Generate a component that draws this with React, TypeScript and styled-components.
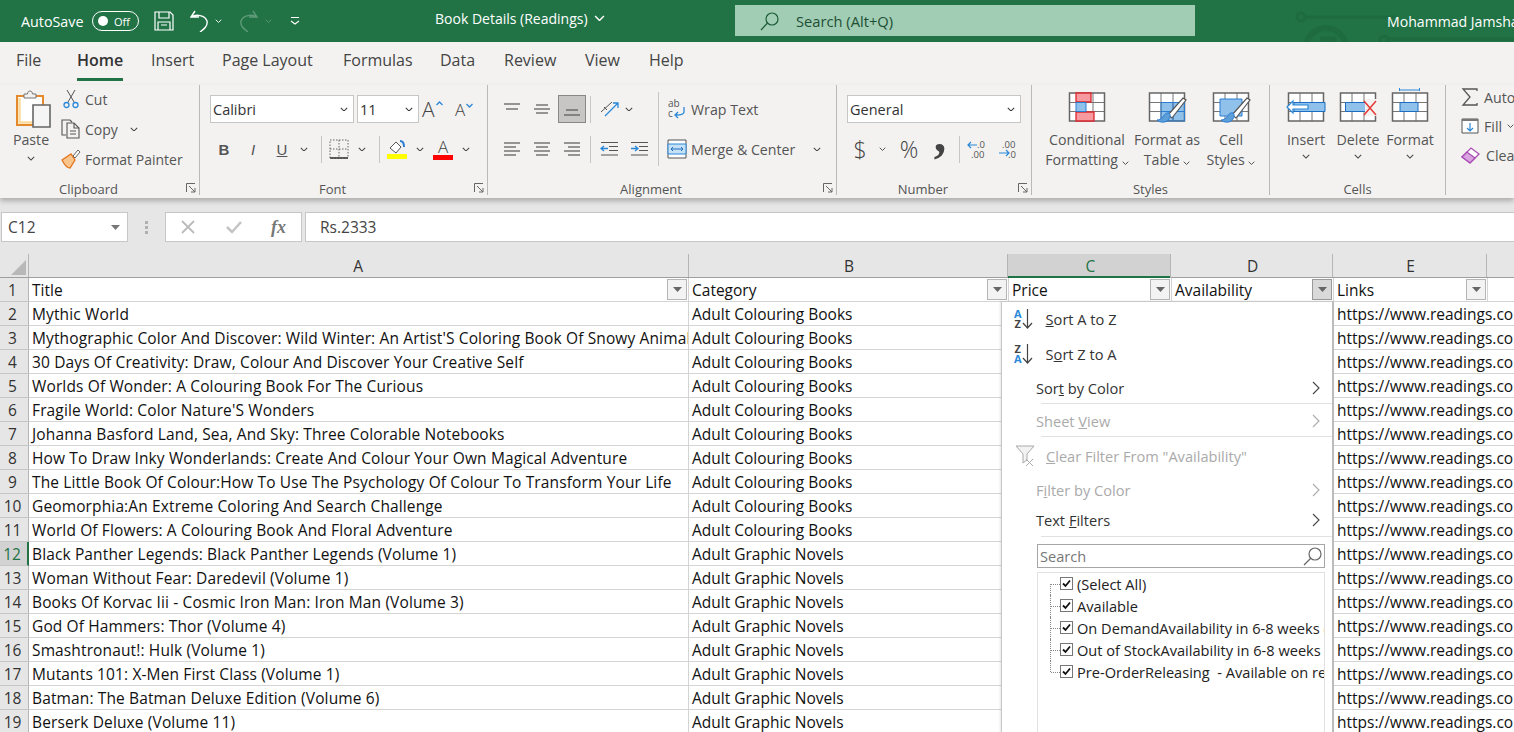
import React from 'react'
import styled, { createGlobalStyle } from 'styled-components'

const UI = '"Open Sans", "Noto Sans", sans-serif'

const rows: [string, string][] = [
  ['Mythic World', 'Adult Colouring Books'],
  ["Mythographic Color And Discover: Wild Winter: An Artist'S Coloring Book Of Snowy Animals", 'Adult Colouring Books'],
  ['30 Days Of Creativity: Draw, Colour And Discover Your Creative Self', 'Adult Colouring Books'],
  ['Worlds Of Wonder: A Colouring Book For The Curious', 'Adult Colouring Books'],
  ["Fragile World: Color Nature'S Wonders", 'Adult Colouring Books'],
  ['Johanna Basford Land, Sea, And Sky: Three Colorable Notebooks', 'Adult Colouring Books'],
  ['How To Draw Inky Wonderlands: Create And Colour Your Own Magical Adventure', 'Adult Colouring Books'],
  ['The Little Book Of Colour:How To Use The Psychology Of Colour To Transform Your Life', 'Adult Colouring Books'],
  ['Geomorphia:An Extreme Coloring And Search Challenge', 'Adult Colouring Books'],
  ['World Of Flowers: A Colouring Book And Floral Adventure', 'Adult Colouring Books'],
  ['Black Panther Legends: Black Panther Legends (Volume 1)', 'Adult Graphic Novels'],
  ['Woman Without Fear: Daredevil (Volume 1)', 'Adult Graphic Novels'],
  ['Books Of Korvac Iii - Cosmic Iron Man: Iron Man (Volume 3)', 'Adult Graphic Novels'],
  ['God Of Hammers: Thor (Volume 4)', 'Adult Graphic Novels'],
  ['Smashtronaut!: Hulk (Volume 1)', 'Adult Graphic Novels'],
  ['Mutants 101: X-Men First Class (Volume 1)', 'Adult Graphic Novels'],
  ['Batman: The Batman Deluxe Edition (Volume 6)', 'Adult Graphic Novels'],
  ['Berserk Deluxe (Volume 11)', 'Adult Graphic Novels'],
]

const tabs: [string, number][] = [
  ['File', 61],
  ['Home', 74],
  ['Insert', 71],
  ['Page Layout', 121],
  ['Formulas', 97],
  ['Data', 64],
  ['Review', 81],
  ['View', 64],
  ['Help', 60],
]

const Chevron = ({ size = 8, color = '#444' }: { size?: number; color?: string }) => (
  <svg width={size} height={size * 0.6} viewBox="0 0 10 6" fill="none" stroke={color} strokeWidth="1.3">
    <path d="M1 1l4 4 4-4" />
  </svg>
)

const Launcher = () => (
  <LauncherBox>
    <svg width="10" height="10" viewBox="0 0 10 10" fill="none" stroke="#666">
      <path d="M.5 9V.5H9M3 3l6 6M9 5v4H5" />
    </svg>
  </LauncherBox>
)

const AlignIcon = ({ lines }: { lines: number[][] }) => (
  <svg width="18" height="16" viewBox="0 0 18 16" stroke="#555" strokeWidth="1.2" fill="none">
    {lines.map(([x1, x2, y]) => (
      <path key={y} d={`M${x1} ${y}H${x2}`} />
    ))}
  </svg>
)

const FilterButton = ({ open }: { open?: boolean }) => (
  <FilterBox open={open}>
    <svg width="9" height="5" viewBox="0 0 9 5">
      <path d="M0 0h9L4.5 5z" fill="#666" />
    </svg>
  </FilterBox>
)

// 35x28 grid, drawn under whatever the icon puts on top of it
const TableIcon = ({ children, under }: { children?: React.ReactNode; under?: React.ReactNode }) => (
  <svg width="40" height="40" viewBox="0 0 40 40" fill="none">
    <path d="M2.500 5h35v28h-35z" fill="#fff" />
    {under}
    <path d="M2.500 14.500h35M2.500 23.500h35M14 5v28M26 5v28" stroke="#777" />
    <path d="M2.500 5h35v28h-35z" stroke="#666" strokeWidth="1.500" />
    {children}
  </svg>
)

const Brush = () => (
  <g>
    <path d="M39 12L25 30l-4-3L36 10z" fill="#fff" stroke="#555" strokeWidth="1.200" />
    <path d="M22 25c-4-1-5 3-7 5-1 1-3 2-5 2 3 3 10 3 12-1 1-2 2-4 0-6z" fill="#5c9fd8" stroke="#2b7cd3" />
  </g>
)

const Top = () => (
  <TitleBar>
    <CircuitArt width="221" height="42" viewBox="0 0 221 42" fill="none" stroke="#1e6b40" strokeWidth="3">
      <circle cx="8" cy="17" r="4" />
      <path d="M12 17h90" />
      <circle cx="33" cy="48" r="20" strokeWidth="6" />
      <path d="M27 39h14v8" strokeWidth="5" />
      <circle cx="91" cy="40" r="4" />
      <path d="M95 39h126" />
    </CircuitArt>
    <AutoLabel>AutoSave</AutoLabel>
    <Toggle>
      <ToggleKnob />
      Off
    </Toggle>
    <QuickIcon>
      <svg width="20" height="20" viewBox="0 0 20 20" fill="none" stroke="#fff" strokeWidth="1.200">
        <path d="M1 1h15l3 3v15H1z" />
        <path d="M5 1v6h10V1M4 19v-8h12v8M7 14h6" />
      </svg>
    </QuickIcon>
    <QuickIcon left={16}>
      <svg width="20" height="22" viewBox="0 0 20 22" fill="none" stroke="#fff" strokeWidth="1.400">
        <path d="M5 1L1 7h8M1 7c5-3 14-2 16 4 1 5-3 8-7 11" />
      </svg>
    </QuickIcon>
    <QuickIcon left={5}>
      <Chevron size={7} color="#fff" />
    </QuickIcon>
    <QuickIcon left={16}>
      <svg width="20" height="22" viewBox="0 0 20 22" fill="none" stroke="#5e9a78" strokeWidth="1.400">
        <path d="M15 1l4 6h-8M19 7C14 4 5 5 3 11c-1 5 3 8 7 11" />
      </svg>
    </QuickIcon>
    <QuickIcon left={7}>
      <Chevron size={7} color="#5e9a78" />
    </QuickIcon>
    <QuickIcon left={18}>
      <svg width="10" height="8" viewBox="0 0 10 8" fill="none" stroke="#fff" strokeWidth="1.100">
        <path d="M1 .5h8M1 4l4 3 4-3" />
      </svg>
    </QuickIcon>
    <DocTitle>
      Book Details (Readings)
      <Chevron size={11} color="#fff" />
    </DocTitle>
    <SearchBox>
      <svg width="20" height="20" viewBox="0 0 20 20" fill="none" stroke="#1d5c39" strokeWidth="1.200">
        <circle cx="12" cy="8" r="6" />
        <path d="M7.500 12L1 19" />
      </svg>
      Search (Alt+Q)
    </SearchBox>
    <UserName>Mohammad Jamshaid</UserName>
  </TitleBar>
)

const Tabs = () => (
  <TabRow>
    {tabs.map(([t, w]) => (
      <Tab key={t} width={w}>
        <TabText active={t === 'Home'}>{t}</TabText>
      </Tab>
    ))}
  </TabRow>
)

const Ribbon = () => (
  <RibbonBar>
    <Group width={200}>
      <GroupBody top={4}>
        <PasteCol>
          <svg width="36" height="38" viewBox="0 0 36 38" fill="none">
            <path d="M2 6h26v29H2z" fill="#fff" stroke="#e58a2c" strokeWidth="2" />
            <path d="M4.500 8v24.500H26" stroke="#fbdca0" strokeWidth="2.500" />
            <path d="M9 8V4h3.500c0-4 5-4 5 0H21v4z" fill="#f3f2f1" stroke="#777" />
            <path d="M18 15h17v22H18z" fill="#f5f5f5" stroke="#666" strokeWidth="1.600" />
          </svg>
          <span>Paste</span>
          <Chevron size={8} />
        </PasteCol>
        <ClipCol>
          <ClipRow>
            <ClipIcon>
              <svg width="16" height="20" viewBox="0 0 16 20" fill="none" stroke="#555">
                <path d="M4 1l7 12M12 1L5 13" />
                <circle cx="3.500" cy="16" r="2.500" stroke="#2b88d8" strokeWidth="1.300" />
                <circle cx="12.500" cy="16" r="2.500" stroke="#2b88d8" strokeWidth="1.300" />
              </svg>
            </ClipIcon>
            Cut
          </ClipRow>
          <ClipRow>
            <ClipIcon>
              <svg width="20" height="20" viewBox="0 0 20 20" fill="none" stroke="#555" strokeWidth="1.100">
                <path d="M5 16H1V1h8l2 2M6 4h7l5 5v10H6z" fill="#f3f2f1" />
                <path d="M13 4v5h5M9 12h6M9 15h6" />
              </svg>
            </ClipIcon>
            Copy
            <ChevronGap>
              <Chevron size={8} />
            </ChevronGap>
          </ClipRow>
          <ClipRow>
            <ClipIcon>
              <svg width="20" height="20" viewBox="0 0 20 20" fill="none">
                <path d="M1 11l9-6 4 6-5 8c-3 0-6-4-8-8z" fill="#f9c58d" stroke="#e1761f" strokeWidth="1.300" />
                <path d="M12 7l5-6 2 2-5 6z" fill="#fff" stroke="#666" />
              </svg>
            </ClipIcon>
            Format Painter
          </ClipRow>
        </ClipCol>
      </GroupBody>
      <GroupLabel launcher>
        Clipboard
        <Launcher />
      </GroupLabel>
    </Group>

    <Group width={288}>
      <GroupBody>
        <StackCol>
          <ToolRow pad={10}>
            <ComboBox width={144}>
              Calibri
              <Chevron size={8} color="#333" />
            </ComboBox>
            <ComboBox width={62}>
              11
              <Chevron size={8} color="#333" />
            </ComboBox>
            <FontSizeBtn size={21}>
              A
              <svg width="7" height="5" viewBox="0 0 7 5" fill="none" stroke="#2b88d8" strokeWidth="1.300">
                <path d="M.5 4l3-3 3 3" />
              </svg>
            </FontSizeBtn>
            <FontSizeBtn size={17}>
              A
              <svg width="7" height="5" viewBox="0 0 7 5" fill="none" stroke="#2b88d8" strokeWidth="1.300">
                <path d="M.5 1l3 3 3-3" />
              </svg>
            </FontSizeBtn>
          </ToolRow>
          <ToolRow pad={13}>
            <FontStyleBtn bold>B</FontStyleBtn>
            <FontStyleBtn italic>I</FontStyleBtn>
            <FontStyleBtn underline>U</FontStyleBtn>
            <Chevron size={8} />
            <Divider />
            <IconBtn>
              <svg width="20" height="20" viewBox="0 0 20 20" fill="none" stroke="#666">
                <path d="M1 1h18v18H1zM10 1v18M1 10h18" strokeDasharray="1.500 1.500" />
                <path d="M1 19h18" stroke="#333" strokeWidth="1.500" />
              </svg>
            </IconBtn>
            <Chevron size={8} />
            <Divider />
            <IconBtn>
              <svg width="20" height="20" viewBox="0 0 20 20" fill="none">
                <path d="M3 9l6-6 5 5-5 6z" fill="#fff" stroke="#555" />
                <path d="M13 2c3 0 4 2 4 6" stroke="#2b7cd3" strokeWidth="2" />
                <path d="M0 15h20v5H0z" fill="#ffff00" />
              </svg>
            </IconBtn>
            <Chevron size={8} />
            <IconBtn>
              <FontColorA>A</FontColorA>
            </IconBtn>
            <Chevron size={8} />
          </ToolRow>
        </StackCol>
      </GroupBody>
      <GroupLabel launcher>
        Font
        <Launcher />
      </GroupLabel>
    </Group>

    <Group width={349}>
      <GroupBody>
        <StackCol>
          <ToolRow pad={10} gap={2}>
            <AlignBtn>
              <AlignIcon lines={[[1, 17, 3], [3, 15, 8]]} />
            </AlignBtn>
            <AlignBtn>
              <AlignIcon lines={[[3, 15, 4], [1, 17, 8], [3, 15, 12]]} />
            </AlignBtn>
            <AlignBtn active>
              <AlignIcon lines={[[3, 15, 9], [1, 17, 14]]} />
            </AlignBtn>
            <AlignDivider />
            <AlignBtn>
              <svg width="22" height="20" viewBox="0 0 22 20" fill="none">
                <path d="M3 13L14 3M6 8l3 3" stroke="#555" />
                <path d="M7 17L20 4M15 4h5v5" stroke="#2b88d8" strokeWidth="1.300" />
              </svg>
            </AlignBtn>
            <Chevron size={8} />
          </ToolRow>
          <ToolRow pad={10} gap={2}>
            <AlignBtn>
              <AlignIcon lines={[[1, 17, 2], [1, 13, 6], [1, 17, 10], [1, 13, 14]]} />
            </AlignBtn>
            <AlignBtn>
              <AlignIcon lines={[[1, 17, 2], [3, 15, 6], [1, 17, 10], [3, 15, 14]]} />
            </AlignBtn>
            <AlignBtn>
              <AlignIcon lines={[[1, 17, 2], [5, 17, 6], [1, 17, 10], [5, 17, 14]]} />
            </AlignBtn>
            <AlignDivider />
            <AlignBtn>
              <svg width="18" height="16" viewBox="0 0 18 16" fill="none" stroke="#555">
                <path d="M1 1.500h17M9 5.500h9M9 9.500h9M1 14h17" />
                <path d="M8 7.500H1M4 5L1 7.500 4 10" stroke="#2b88d8" strokeWidth="1.300" />
              </svg>
            </AlignBtn>
            <AlignBtn>
              <svg width="18" height="16" viewBox="0 0 18 16" fill="none" stroke="#555">
                <path d="M1 1.500h17M9 5.500h9M9 9.500h9M1 14h17" />
                <path d="M1 7.500h7M5 5l3 2.500L5 10" stroke="#2b88d8" strokeWidth="1.300" />
              </svg>
            </AlignBtn>
          </ToolRow>
        </StackCol>
        <VRule />
        <StackCol>
          <WideRow>
            <svg width="20" height="20" viewBox="0 0 20 20" fill="none">
              <text x="1" y="8" fontSize="10" fill="#555" fontFamily="Open Sans">ab</text>
              <text x="1" y="18" fontSize="10" fill="#555" fontFamily="Open Sans">c</text>
              <path d="M17 8v5c0 2-2 3-8 3M11 13l-3 3 3 3" stroke="#2b88d8" strokeWidth="1.300" />
            </svg>
            Wrap Text
          </WideRow>
          <WideRow>
            <svg width="20" height="20" viewBox="0 0 20 20" fill="none">
              <path d="M1 1h18v18H1z" fill="#fff" stroke="#555" />
              <path d="M1 5h18v10H1z" fill="#c6e0f5" stroke="#2b88d8" />
              <path d="M4 10h12M6 8l-2 2 2 2M14 8l2 2-2 2" stroke="#1b6ec2" />
            </svg>
            Merge &amp; Center
            <ChevronGap wide>
              <Chevron size={8} />
            </ChevronGap>
          </WideRow>
        </StackCol>
      </GroupBody>
      <GroupLabel launcher>
        Alignment
        <Launcher />
      </GroupLabel>
    </Group>

    <Group width={195}>
      <GroupBody>
        <StackCol>
          <ToolRow pad={10}>
            <ComboBox width={174}>
              General
              <Chevron size={8} color="#333" />
            </ComboBox>
          </ToolRow>
          <NumberRow>
            <NumGlyph width={22}>$</NumGlyph>
            <Chevron size={7} />
            <NumGlyph width={30}>%</NumGlyph>
            <CommaGlyph>,</CommaGlyph>
            <NumDivider />
            <DecimalIcon>
              <svg width="20" height="20" viewBox="0 0 20 20" fill="none">
                <text x="10" y="9" fontSize="9.500" fill="#555" fontFamily="Open Sans">.0</text>
                <text x="4" y="19" fontSize="9.500" fill="#555" fontFamily="Open Sans">.00</text>
                <path d="M10 6H1M4 3L1 6l3 3" stroke="#2b88d8" strokeWidth="1.200" />
              </svg>
            </DecimalIcon>
            <DecimalIcon>
              <svg width="20" height="20" viewBox="0 0 20 20" fill="none">
                <text x="4" y="9" fontSize="9.500" fill="#555" fontFamily="Open Sans">.00</text>
                <text x="10" y="19" fontSize="9.500" fill="#555" fontFamily="Open Sans">.0</text>
                <path d="M1 14h10M8 11l3 3-3 3" stroke="#2b88d8" strokeWidth="1.200" />
              </svg>
            </DecimalIcon>
          </NumberRow>
        </StackCol>
      </GroupBody>
      <GroupLabel launcher>
        Number
        <Launcher />
      </GroupLabel>
    </Group>

    <Group width={238}>
      <GroupBody>
        <BigRow>
          <BigBtn width={90}>
            <TableIcon>
              <path d="M9 5h15v9H9zM9 24h18v9H9z" fill="#f79a9f" stroke="#d9272e" strokeWidth="1.300" />
              <path d="M9 14.500h10v9H9z" fill="#8fc1ea" stroke="#2b7cd3" />
            </TableIcon>
            <BigLabel>
              Conditional
              <br />
              Formatting <Chevron size={7} />
            </BigLabel>
          </BigBtn>
          <BigBtn width={70}>
            <TableIcon under={<path d="M14 14.500h23.500V33H14z" fill="#8fc1ea" />}>
              <path d="M14 14.500h23.500V33H14zM14 23.500h23.500M26 14.500V33" stroke="#2b7cd3" />
              <Brush />
            </TableIcon>
            <BigLabel>
              Format as
              <br />
              Table <Chevron size={7} />
            </BigLabel>
          </BigBtn>
          <BigBtn width={58}>
            <TableIcon>
              <path d="M9 11h22v17H9z" fill="#8fc1ea" stroke="#2b7cd3" />
              <Brush />
            </TableIcon>
            <BigLabel>
              Cell
              <br />
              Styles <Chevron size={7} />
            </BigLabel>
          </BigBtn>
        </BigRow>
      </GroupBody>
      <GroupLabel>Styles</GroupLabel>
    </Group>

    <Group width={176}>
      <GroupBody>
        <CellsRow>
          <BigBtn width={52}>
            <TableIcon>
              <path d="M8 14.500h31v9H8z" fill="#8fc1ea" stroke="#1b6ec2" />
              <path d="M22 17v4H7v4L1 19l6-6v4z" fill="#fff" stroke="#2b88d8" strokeWidth="1.200" />
            </TableIcon>
            <BigLabel>Insert</BigLabel>
            <Chevron size={8} />
          </BigBtn>
          <BigBtn width={52}>
            <TableIcon>
              <path d="M7.500 14.500h20v9h-20z" fill="#8fc1ea" stroke="#1b6ec2" />
              <path d="M27 11h13v17H27z" fill="#f3f2f1" />
              <path d="M26 13l12 14M38 13L26 27" stroke="#e53935" strokeWidth="1.500" />
            </TableIcon>
            <BigLabel>Delete</BigLabel>
            <Chevron size={8} />
          </BigBtn>
          <BigBtn width={52}>
            <TableIcon>
              <path d="M10 14.500h18v9H10z" fill="#8fc1ea" stroke="#1b6ec2" />
              <path d="M9.500 2h20M9.500 0v3M29.500 0v3" stroke="#2b88d8" />
            </TableIcon>
            <BigLabel>Format</BigLabel>
            <Chevron size={8} />
          </BigBtn>
        </CellsRow>
      </GroupBody>
      <GroupLabel>Cells</GroupLabel>
    </Group>

    <EditCol>
      <EditRow>
        <svg width="18" height="18" viewBox="0 0 18 18" fill="none" stroke="#555" strokeWidth="1.300">
          <path d="M16 3V1H2l7 8-7 8h14v-2" />
        </svg>
        AutoSum
      </EditRow>
      <EditRow>
        <svg width="18" height="18" viewBox="0 0 18 18" fill="none">
          <path d="M1 2h16v14H1z" fill="#fff" stroke="#555" />
          <path d="M1 2h16v2H1z" fill="#777" />
          <path d="M9 6v8M6 11l3 3 3-3" stroke="#2b88d8" strokeWidth="1.200" />
        </svg>
        Fill <Chevron size={7} />
      </EditRow>
      <EditRow>
        <svg width="20" height="18" viewBox="0 0 20 18" fill="none">
          <path d="M1 11l9-9 8 6-9 9z" fill="#fff" stroke="#a94bb5" strokeWidth="1.300" />
          <path d="M1 11l5-5 8 6-5 5z" fill="#d9a3e0" stroke="#a94bb5" strokeWidth="1.300" />
        </svg>
        Clear
      </EditRow>
    </EditCol>
  </RibbonBar>
)

const Formula = () => (
  <FormulaBar>
    <NameBox>
      C12
      <svg width="9" height="5" viewBox="0 0 9 5">
        <path d="M0 0h9L4.500 5z" fill="#777" />
      </svg>
    </NameBox>
    <Grip>
      <i />
      <i />
      <i />
    </Grip>
    <FxBox>
      <svg width="16" height="16" viewBox="0 0 16 16" fill="none" stroke="#bbb" strokeWidth="1.800">
        <path d="M2 2l12 12M14 2L2 14" />
      </svg>
      <svg width="18" height="16" viewBox="0 0 18 16" fill="none" stroke="#c4c4c4" strokeWidth="2.500">
        <path d="M2 8l5 5 9-10" />
      </svg>
      <FxText>fx</FxText>
    </FxBox>
    <FormulaInput>Rs.2333</FormulaInput>
  </FormulaBar>
)

const columns = [
  { name: 'A', width: 660 },
  { name: 'B', width: 320 },
  { name: 'C', width: 163, active: true },
  { name: 'D', width: 162 },
  { name: 'E', width: 154 },
  { name: '', width: 27 },
]

const Sheet = () => (
  <SheetWrap>
    <HeadRow>
      <Corner>
        <CornerTriangle />
      </Corner>
      {columns.map((c) => (
        <ColHead key={c.name} width={c.width} active={c.active}>
          {c.name}
        </ColHead>
      ))}
    </HeadRow>
    <DataRow>
      <RowHead>1</RowHead>
      <Cell width={660}>
        Title
        <FilterButton />
      </Cell>
      <Cell width={320}>
        Category
        <FilterButton />
      </Cell>
      <Cell width={163}>
        Price
        <FilterButton />
      </Cell>
      <Cell width={162}>
        Availability
        <FilterButton open />
      </Cell>
      <Cell width={154}>
        Links
        <FilterButton />
      </Cell>
      <Cell width={27} />
    </DataRow>
    {rows.map(([title, category], i) => (
      <DataRow key={title}>
        <RowHead active={i + 2 === 12}>{i + 2}</RowHead>
        <TitleCell width={660}>{title}</TitleCell>
        <Cell width={320}>{category}</Cell>
        <Cell width={163} />
        <Cell width={162} />
        <Cell width={181}>https://www.readings.com.pk</Cell>
      </DataRow>
    ))}
    <FilterMenu />
  </SheetWrap>
)

const Arrow = ({ faded }: { faded?: boolean }) => (
  <svg width="8" height="14" viewBox="0 0 8 14" fill="none" stroke={faded ? '#aaa' : '#444'} strokeWidth="1.100">
    <path d="M1 1l6 6-6 6" />
  </svg>
)

const SortIcon = ({ first, second }: { first: string; second: string }) => (
  <SortGlyph>
    <SortLetters>
      <SortLetter blue={first === 'A'}>{first}</SortLetter>
      <SortLetter blue={second === 'A'}>{second}</SortLetter>
    </SortLetters>
    <svg width="11" height="20" viewBox="0 0 11 20" fill="none" stroke="#444" strokeWidth="1.200">
      <path d="M5.500 0v19M1 14l4.500 5 4.500-5" />
    </svg>
  </SortGlyph>
)

const checks = [
  '(Select All)',
  'Available',
  'On DemandAvailability in 6-8 weeks (on order)',
  'Out of StockAvailability in 6-8 weeks (on order)',
  'Pre-OrderReleasing  - Available on release date',
]

const FilterMenu = () => (
  <Menu>
    <SortItem height={34}>
      <SortIcon first="A" second="Z" />
      <span>
        <u>S</u>ort A to Z
      </span>
    </SortItem>
    <SortItem height={36}>
      <SortIcon first="Z" second="A" />
      <span>
        S<u>o</u>rt Z to A
      </span>
    </SortItem>
    <MenuItem height={32} sep>
      <span>
        Sor<u>t</u> by Color
      </span>
      <Arrow />
    </MenuItem>
    <MenuItem height={33} sep disabled>
      <span>
        Sheet <u>V</u>iew
      </span>
      <Arrow faded />
    </MenuItem>
    <ClearItem>
      <svg width="20" height="22" viewBox="0 0 20 22" fill="none" stroke="#aaa">
        <path d="M1 1h18l-7 8v6l-4 3V9z" fill="#f2f2f2" />
        <path d="M11 14l7 7M18 14l-7 7" />
      </svg>
      <span>
        <u>C</u>lear Filter From "Availability"
      </span>
    </ClearItem>
    <MenuItem height={30} disabled>
      <span>
        F<u>i</u>lter by Color
      </span>
      <Arrow faded />
    </MenuItem>
    <MenuItem height={32} sep lift>
      <span>
        Text <u>F</u>ilters
      </span>
      <Arrow />
    </MenuItem>
    <MenuSearch>
      Search
      <svg width="20" height="20" viewBox="0 0 20 20" fill="none" stroke="#666" strokeWidth="1.200">
        <circle cx="12" cy="8" r="6" />
        <path d="M8 12l-7 7" />
      </svg>
    </MenuSearch>
    <CheckList>
      {checks.map((c, i) => (
        <CheckRow key={c} first={i === 0} last={i === checks.length - 1}>
          <CheckBox>
            <svg width="9" height="9" viewBox="0 0 9 9" fill="none" stroke="#111" strokeWidth="1.800">
              <path d="M1 4.500l2.500 2.500L8 1.500" />
            </svg>
          </CheckBox>
          <CheckText>{c}</CheckText>
        </CheckRow>
      ))}
    </CheckList>
  </Menu>
)

const App = () => (
  <>
    <GlobalStyle />
    <Page>
      <Top />
      <Tabs />
      <Ribbon />
      <Formula />
      <Sheet />
    </Page>
  </>
)

const GlobalStyle = createGlobalStyle`
  html, body {
    margin: 0;
    padding: 0;
    overflow: hidden;
    background: #e6e6e6;
  }
`

const Page = styled.div`
  width: 1514px;
  height: 732px;
  overflow: hidden;
  font-family: ${UI};
  color: #444;
  background: #e6e6e6;
  display: flex;
  flex-direction: column;
`

const TitleBar = styled.div`
  position: relative;
  flex: none;
  height: 42px;
  background: #217346;
  color: #fff;
  display: flex;
  align-items: center;
  padding-left: 21px;
  font-size: 14.300px;
  overflow: hidden;
  & > * {
    flex: none;
  }
`

const CircuitArt = styled.svg`
  position: absolute;
  left: 1293px;
  top: 0;
`

const AutoLabel = styled.span`
  width: 71px;
`

const Toggle = styled.div`
  box-sizing: border-box;
  width: 47px;
  height: 20px;
  margin-right: 15px;
  border: 1px solid #fff;
  border-radius: 10px;
  display: flex;
  align-items: center;
  gap: 6px;
  padding-left: 5px;
  font-size: 11px;
`

const ToggleKnob = styled.span`
  width: 10px;
  height: 10px;
  border-radius: 50%;
  background: #fff;
`

const QuickIcon = styled.span<{ left?: number }>`
  display: flex;
  align-items: center;
  margin-left: ${(p) => p.left ?? 0}px;
`

const DocTitle = styled.div`
  margin-left: 135px;
  margin-top: -6px;
  width: 300px;
  font-size: 14px;
  display: flex;
  align-items: center;
  gap: 6px;
`

const SearchBox = styled.div`
  box-sizing: border-box;
  width: 460px;
  height: 31px;
  margin-top: -1px;
  background: #a0cdb3;
  color: #1f4e35;
  display: flex;
  align-items: center;
  gap: 16px;
  padding-left: 25px;
  font-size: 14.700px;
`

const UserName = styled.div`
  position: relative;
  margin-left: 192px;
  white-space: nowrap;
  font-size: 14.100px;
`

const TabRow = styled.div`
  flex: none;
  box-sizing: border-box;
  height: 43px;
  background: #f3f2f1;
  display: flex;
  padding-left: 16px;
  font-size: 16px;
  color: #444;
`

const Tab = styled.div<{ width: number }>`
  flex: none;
  width: ${(p) => p.width}px;
  padding-top: 7px;
`

const TabText = styled.span<{ active?: boolean }>`
  display: inline-block;
  height: 29px;
  white-space: nowrap;
  font-weight: ${(p) => (p.active ? 600 : 400)};
  color: ${(p) => (p.active ? '#333' : '#444')};
  border-bottom: ${(p) => (p.active ? '3px solid #217346' : 'none')};
`

const RibbonBar = styled.div`
  flex: none;
  height: 113px;
  background: #f3f2f1;
  display: flex;
  box-shadow: 0 3px 5px rgba(0, 0, 0, 0.25);
  position: relative;
  font-size: 14.200px;
`

const Group = styled.div<{ width: number }>`
  box-sizing: border-box;
  flex: none;
  width: ${(p) => p.width}px;
  height: 110px;
  border-right: 1px solid #b9b9b9;
  display: flex;
  flex-direction: column;
`

const GroupBody = styled.div<{ top?: number }>`
  flex: 1;
  min-height: 0;
  display: flex;
  align-items: flex-start;
  padding-top: ${(p) => p.top ?? 10}px;
`

const GroupLabel = styled.div<{ launcher?: boolean }>`
  position: relative;
  height: 18px;
  margin-bottom: -3px;
  padding-right: ${(p) => (p.launcher ? 22 : 0)}px;
  line-height: 18px;
  text-align: center;
  font-size: 13px;
  color: #555;
`

const LauncherBox = styled.span`
  position: absolute;
  right: 3px;
  top: 3px;
  display: flex;
`

const PasteCol = styled.div`
  flex: none;
  width: 60px;
  margin-left: 1px;
  display: flex;
  flex-direction: column;
  align-items: center;
  color: #555;
  padding-top: 1px;
  & > svg:first-child {
    margin-left: 4px;
  }
  & > span {
    line-height: 20px;
    margin-top: 2px;
  }
  & > svg:last-child {
    margin-top: 6px;
  }
`

const ClipCol = styled.div`
  display: flex;
  flex-direction: column;
  gap: 10px;
  font-size: 14px;
`

const ClipRow = styled.div`
  display: flex;
  align-items: center;
  gap: 4px;
  height: 20px;
  color: #555;
  white-space: nowrap;
`

const ClipIcon = styled.span`
  flex: none;
  width: 20px;
  display: flex;
  justify-content: center;
`

const ChevronGap = styled.span<{ wide?: boolean }>`
  display: flex;
  margin-left: ${(p) => (p.wide ? 14 : 8)}px;
`

const StackCol = styled.div`
  display: flex;
  flex-direction: column;
  gap: 12px;
`

const ToolRow = styled.div<{ pad: number; gap?: number }>`
  display: flex;
  align-items: center;
  height: 28px;
  gap: ${(p) => p.gap ?? 7}px;
  padding-left: ${(p) => p.pad}px;
`

const ComboBox = styled.div<{ width: number }>`
  box-sizing: border-box;
  flex: none;
  width: ${(p) => p.width}px;
  height: 28px;
  background: #fff;
  border: 1px solid #c6c6c6;
  margin-right: -4px;
  padding: 0 5px 0 2px;
  display: flex;
  align-items: center;
  justify-content: space-between;
  font-size: 14.500px;
  color: #333;
`

const FontSizeBtn = styled.span<{ size: number }>`
  width: 26px;
  display: flex;
  align-items: flex-start;
  font-size: ${(p) => p.size}px;
  font-weight: 300;
  color: #444;
  line-height: 1;
  white-space: nowrap;
  & > svg {
    margin: 2px 0 0 1px;
  }
`

const FontStyleBtn = styled.span<{ bold?: boolean; italic?: boolean; underline?: boolean }>`
  width: 22px;
  text-align: center;
  font-family: 'Liberation Sans', sans-serif;
  font-size: 15px;
  color: #555;
  font-weight: ${(p) => (p.bold ? 700 : 400)};
  font-style: ${(p) => (p.italic ? 'italic' : 'normal')};
  text-decoration: ${(p) => (p.underline ? 'underline' : 'none')};
`

const Divider = styled.span`
  flex: none;
  width: 1px;
  height: 27px;
  margin: 0 -2px 0 6px;
  background: #c6c6c6;
`

const AlignDivider = styled(Divider)`
  margin: 0 2px;
`

const NumDivider = styled(Divider)`
  margin: 0 -1px 0 3px;
`

const IconBtn = styled.span`
  display: flex;
  align-items: center;
  justify-content: center;
  width: 24px;
`

const FontColorA = styled.span`
  width: 20px;
  text-align: center;
  font-size: 17px;
  font-weight: 300;
  line-height: 17px;
  color: #444;
  border-bottom: 5px solid #ff0000;
`

const AlignBtn = styled.span<{ active?: boolean }>`
  box-sizing: border-box;
  flex: none;
  width: 28px;
  height: 28px;
  display: flex;
  align-items: center;
  justify-content: center;
  background: ${(p) => (p.active ? '#c8c6c4' : 'transparent')};
  border: 1px solid ${(p) => (p.active ? '#8a8886' : 'transparent')};
`

const VRule = styled.span`
  flex: none;
  width: 1px;
  height: 74px;
  margin: -3px 8px 0 5px;
  background: #c6c6c6;
`

const WideRow = styled.div`
  display: flex;
  align-items: center;
  gap: 4px;
  height: 28px;
  color: #555;
  white-space: nowrap;
`

const NumberRow = styled.div`
  display: flex;
  align-items: center;
  height: 28px;
  gap: 8px;
  padding-left: 12px;
`

const NumGlyph = styled.span<{ width: number }>`
  width: ${(p) => p.width}px;
  text-align: center;
  font-size: 23px;
  line-height: 22px;
  font-weight: 300;
  color: #444;
`

const CommaGlyph = styled.span`
  width: 16px;
  height: 24px;
  margin-top: -6px;
  text-align: center;
  font-family: 'Liberation Serif', serif;
  font-size: 50px;
  line-height: 0;
  font-weight: 700;
  color: #444;
`

const DecimalIcon = styled.span`
  display: flex;
  &:last-child {
    margin-left: 3px;
  }
`

const BigRow = styled.div`
  display: flex;
  padding-left: 10px;
  margin-top: -7px;
`

const CellsRow = styled.div`
  display: flex;
  padding-left: 10px;
  margin-top: -7px;
`

const BigBtn = styled.div<{ width: number }>`
  flex: none;
  width: ${(p) => p.width}px;
  display: flex;
  flex-direction: column;
  align-items: center;
  color: #555;
  & > svg:first-child {
    margin-bottom: 2px;
  }
`

const BigLabel = styled.div`
  text-align: center;
  line-height: 20px;
  white-space: nowrap;
  margin-bottom: 4px;
`

const EditCol = styled.div`
  display: flex;
  flex-direction: column;
  gap: 9px;
  padding: 2px 0 0 15px;
`

const EditRow = styled.div`
  display: flex;
  align-items: center;
  gap: 5px;
  height: 20px;
  color: #555;
  white-space: nowrap;
`

const FormulaBar = styled.div`
  flex: none;
  height: 30px;
  margin-top: 14px;
  padding-left: 1px;
  display: flex;
  align-items: stretch;
  position: relative;
  font-size: 15.500px;
`

const NameBox = styled.div`
  box-sizing: border-box;
  width: 127px;
  background: #fff;
  border: 1px solid #c6c6c6;
  padding: 0 7px 0 6px;
  display: flex;
  align-items: center;
  justify-content: space-between;
  color: #444;
`

const Grip = styled.div`
  width: 37px;
  display: flex;
  flex-direction: column;
  align-items: center;
  justify-content: center;
  gap: 2px;
  & > i {
    width: 3px;
    height: 3px;
    background: #b0b0b0;
  }
`

const FxBox = styled.div`
  box-sizing: border-box;
  width: 137px;
  background: #fff;
  border: 1px solid #c6c6c6;
  margin-right: 3px;
  display: flex;
  align-items: center;
  justify-content: space-between;
  padding: 0 15px 0 14px;
`

const FxText = styled.span`
  font-family: 'Liberation Serif', serif;
  font-style: italic;
  font-size: 18px;
  font-weight: 700;
  color: #777;
`

const FormulaInput = styled.div`
  box-sizing: border-box;
  flex: 1;
  background: #fff;
  border: 1px solid #c6c6c6;
  border-right: none;
  padding-left: 14px;
  display: flex;
  align-items: center;
  color: #444;
`

const SheetWrap = styled.div`
  position: relative;
  flex: 1;
  margin-top: 12px;
  min-height: 0;
  font-size: 15.500px;
  color: #111;
`

const HeadRow = styled.div`
  display: flex;
  height: 24px;
  background: #e6e6e6;
  border-bottom: 1px solid #9f9f9f;
  box-sizing: border-box;
`

const Corner = styled.div`
  box-sizing: border-box;
  width: 29px;
  border-right: 1px solid #b5b5b5;
  position: relative;
`

const CornerTriangle = styled.div`
  position: absolute;
  right: 2px;
  bottom: 2px;
  width: 0;
  height: 0;
  border-style: solid;
  border-width: 0 0 15px 15px;
  border-color: transparent transparent #b8b8b8 transparent;
`

const ColHead = styled.div<{ width: number; active?: boolean }>`
  box-sizing: border-box;
  width: ${(p) => p.width}px;
  text-align: center;
  line-height: 24px;
  border-right: 1px solid #b5b5b5;
  background: ${(p) => (p.active ? '#d2d2d2' : 'transparent')};
  color: ${(p) => (p.active ? '#217346' : '#333')};
  ${(p) => (p.active ? 'box-shadow: inset 0 -2px 0 #217346; height: 24px;' : '')}
  &:not(:nth-child(2)) {
    padding-left: 2px;
  }
  &:last-child {
    border-right: none;
  }
`

const DataRow = styled.div`
  display: flex;
  height: 24px;
`

const RowHead = styled.div<{ active?: boolean }>`
  box-sizing: border-box;
  flex: none;
  width: 29px;
  padding-right: 3px;
  text-align: center;
  line-height: 24px;
  background: ${(p) => (p.active ? '#d2d2d2' : '#e6e6e6')};
  color: ${(p) => (p.active ? '#217346' : '#333')};
  border-right: ${(p) => (p.active ? '2px solid #217346' : '1px solid #b5b5b5')};
  border-bottom: 1px solid #c6c6c6;
`

const Cell = styled.div<{ width: number }>`
  box-sizing: border-box;
  position: relative;
  flex: none;
  width: ${(p) => p.width}px;
  padding-left: 3px;
  background: #fff;
  border-right: 1px solid #d4d4d4;
  border-bottom: 1px solid #d4d4d4;
  line-height: 24px;
  white-space: nowrap;
  overflow: hidden;
`

const TitleCell = styled(Cell)`
  letter-spacing: 0.13px;
`

const FilterBox = styled.span<{ open?: boolean }>`
  box-sizing: border-box;
  position: absolute;
  right: 1px;
  top: 1px;
  width: 20px;
  height: 21px;
  display: flex;
  align-items: center;
  justify-content: center;
  background: ${(p) => (p.open ? '#d9d9d9' : '#f3f3f3')};
  border: 1px solid ${(p) => (p.open ? '#999' : '#b5b5b5')};
`

const Menu = styled.div`
  box-sizing: border-box;
  position: absolute;
  left: 1001px;
  top: 47px;
  width: 333px;
  height: 440px;
  background: #fff;
  border: 1px solid #c8c8c8;
  border-right: 2px solid #bcbcbc;
  box-shadow: -1px 0 2px rgba(0, 0, 0, 0.1);
  font-size: 14.600px;
  color: #333;
  display: flex;
  flex-direction: column;
`

const SortItem = styled.div<{ height: number }>`
  flex: none;
  height: ${(p) => p.height}px;
  display: flex;
  align-items: center;
  padding-left: 12px;
  gap: 13px;
`

const SortGlyph = styled.span`
  display: flex;
  align-items: center;
`

const SortLetters = styled.span`
  display: flex;
  flex-direction: column;
  align-items: center;
`

const SortLetter = styled.span<{ blue?: boolean }>`
  font-size: 11px;
  line-height: 10px;
  font-weight: 700;
  color: ${(p) => (p.blue ? '#2b88d8' : '#444')};
`

const MenuItem = styled.div<{ height: number; sep?: boolean; disabled?: boolean; lift?: boolean }>`
  box-sizing: border-box;
  flex: none;
  position: relative;
  height: ${(p) => p.height}px;
  padding: 0 12px ${(p) => (p.lift ? 3 : 0)}px 34px;
  display: flex;
  align-items: center;
  justify-content: space-between;
  color: ${(p) => (p.disabled ? '#aaa' : '#333')};
  ${(p) =>
    p.sep &&
    `
    &::after {
      content: '';
      position: absolute;
      left: 39px;
      right: 0;
      bottom: 0;
      height: 1px;
      background: #e1e1e1;
    }
  `}
`

const ClearItem = styled.div`
  flex: none;
  height: 38px;
  display: flex;
  align-items: center;
  padding-left: 13px;
  gap: 11px;
  color: #aaa;
`

const MenuSearch = styled.div`
  box-sizing: border-box;
  flex: none;
  width: 288px;
  height: 24px;
  margin: 7px 0 4px 35px;
  border: 1px solid #a6a6a6;
  padding-left: 2px;
  padding-right: 1px;
  display: flex;
  align-items: center;
  justify-content: space-between;
  color: #777;
`

const CheckList = styled.div`
  box-sizing: border-box;
  flex: 1;
  width: 288px;
  margin-left: 35px;
  border: 1px solid #e1e1e1;
  padding: 0 0 0 22px;
  overflow: hidden;
`

const CheckRow = styled.div<{ first?: boolean; last?: boolean }>`
  position: relative;
  height: 22px;
  display: flex;
  align-items: center;
  gap: 4px;
  &::before {
    content: '';
    position: absolute;
    left: -10px;
    top: ${(p) => (p.first ? 11 : 0)}px;
    height: ${(p) => (p.first || p.last ? 11 : 22)}px;
    border-left: 1px dotted #888;
  }
  &::after {
    content: '';
    position: absolute;
    left: -9px;
    top: 11px;
    width: 9px;
    border-top: 1px dotted #888;
  }
`

const CheckBox = styled.span`
  box-sizing: border-box;
  flex: none;
  width: 13px;
  height: 13px;
  margin-top: -2px;
  border: 1px solid #777;
  background: #fff;
  display: flex;
  align-items: center;
  justify-content: center;
`

const CheckText = styled.span`
  white-space: pre;
  color: #222;
`

export default App
